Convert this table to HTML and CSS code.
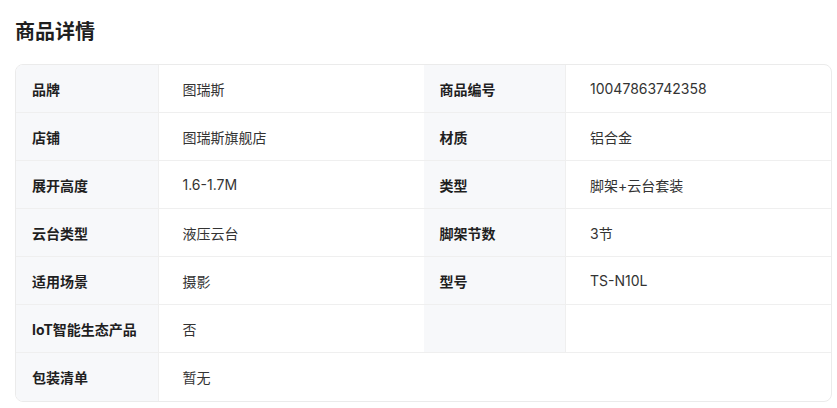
FILE: index.html
```html
<!DOCTYPE html>
<html lang="zh">
<head>
<meta charset="utf-8">
<link rel="stylesheet" href="styles.css">
</head>
<body>
<div class="page">
  <h1 class="title">商品详情</h1>
  <div class="card">
    <table class="specs">
      <colgroup>
        <col class="c-label"><col class="c-value"><col class="c-label"><col class="c-value">
      </colgroup>
      <tr><td class="label">品牌</td><td class="value">图瑞斯</td><td class="label">商品编号</td><td class="value last">10047863742358</td></tr>
      <tr><td class="label">店铺</td><td class="value">图瑞斯旗舰店</td><td class="label">材质</td><td class="value last">铝合金</td></tr>
      <tr><td class="label">展开高度</td><td class="value">1.6-1.7M</td><td class="label">类型</td><td class="value last">脚架+云台套装</td></tr>
      <tr><td class="label">云台类型</td><td class="value">液压云台</td><td class="label">脚架节数</td><td class="value last">3节</td></tr>
      <tr><td class="label">适用场景</td><td class="value">摄影</td><td class="label">型号</td><td class="value last">TS-N10L</td></tr>
      <tr><td class="label">IoT智能生态产品</td><td class="value">否</td><td class="label"></td><td class="value last"></td></tr>
      <tr class="final"><td class="label">包装清单</td><td class="value last" colspan="3">暂无</td></tr>
    </table>
  </div>
</div>
</body>
</html>
```

FILE: styles.css
```css
html, body {
  margin: 0;
  padding: 0;
  background: #fff;
}
body {
  font-family: Inter, "Noto Sans CJK SC", sans-serif;
  color: #222;
}
.page {
  padding: 18px 5px 0 15px;
}
.title {
  margin: 0 0 18px;
  font-size: 20px;
  line-height: 28px;
  font-weight: 700;
  color: #1f1f1f;
}
.card {
  border: 1px solid #ebebeb;
  border-radius: 8px;
  overflow: hidden;
  width: 815px;
}
.specs {
  width: 100%;
  border-collapse: collapse;
  table-layout: fixed;
}
.c-label { width: 142px; }
.specs td {
  height: 47px;
  padding: 0;
  border-bottom: 1px solid #efefef;
  vertical-align: middle;
}
.specs tr.final td { border-bottom: none; height: 48px; }
.label {
  background: #f7f8fa;
  padding-left: 16px !important;
  font-size: 14px;
  font-weight: 700;
  color: #1f1f1f;
  border-right: 1px solid #efefef;
}
.value {
  padding-left: 24px !important;
  font-size: 14px;
  color: #333;
}
.value.last { border-right: none; }
```
